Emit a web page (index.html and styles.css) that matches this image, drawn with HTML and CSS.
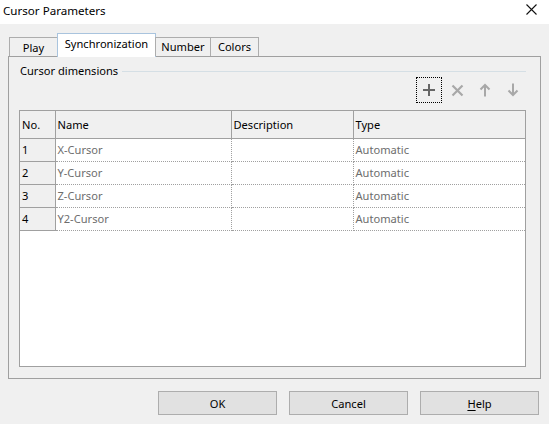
FILE: index.html
```html
<!DOCTYPE html>
<html>
<head>
<meta charset="utf-8">
<link rel="stylesheet" href="styles.css">
</head>
<body>
<div class="dialog">
  <div class="titlebar">
    <span class="title">Cursor Parameters</span>
    <svg class="close" width="11" height="11" viewBox="0 0 11 11"><path d="M0.5 0.5 L10.5 10.5 M10.5 0.5 L0.5 10.5" stroke="#111" stroke-width="1.1" fill="none"/></svg>
  </div>
  <div class="body">
    <div class="tabs">
      <div class="tab tab-play">Play</div>
      <div class="tab tab-active">Synchronization</div>
      <div class="tab tab-number">Number</div>
      <div class="tab tab-colors">Colors</div>
    </div>
    <div class="panel">
      <div class="group-head">
        <span class="group-label">Cursor dimensions</span>
        <span class="group-line"></span>
      </div>
      <div class="toolbar">
        <div class="tbtn focus">
          <svg width="14" height="14" viewBox="0 0 14 14"><path d="M7 1 V13 M1 7 H13" stroke="#666" stroke-width="2" fill="none"/></svg>
        </div>
        <div class="tbtn">
          <svg width="13" height="13" viewBox="0 0 13 13"><path d="M1.5 1.5 L11.5 11.5 M11.5 1.5 L1.5 11.5" stroke="#a8a8a8" stroke-width="2.2" fill="none"/></svg>
        </div>
        <div class="tbtn">
          <svg width="12" height="14" viewBox="0 0 12 14"><path d="M6 2 V13.5 M1.5 6.5 L6 2 L10.5 6.5" stroke="#a8a8a8" stroke-width="2" fill="none"/></svg>
        </div>
        <div class="tbtn">
          <svg width="12" height="14" viewBox="0 0 12 14"><path d="M6 0.5 V12 M1.5 7.5 L6 12 L10.5 7.5" stroke="#a8a8a8" stroke-width="2" fill="none"/></svg>
        </div>
      </div>
      <div class="grid">
        <table>
          <colgroup>
            <col class="c-no"><col class="c-name"><col class="c-desc"><col class="c-type">
          </colgroup>
          <thead>
            <tr><th>No.</th><th>Name</th><th>Description</th><th class="last">Type</th></tr>
          </thead>
          <tbody>
            <tr><td class="no">1</td><td>X-Cursor</td><td></td><td class="last">Automatic</td></tr>
            <tr><td class="no">2</td><td>Y-Cursor</td><td></td><td class="last">Automatic</td></tr>
            <tr><td class="no">3</td><td>Z-Cursor</td><td></td><td class="last">Automatic</td></tr>
            <tr><td class="no">4</td><td>Y2-Cursor</td><td></td><td class="last">Automatic</td></tr>
          </tbody>
        </table>
      </div>
    </div>
    <div class="buttons">
      <div class="btn">OK</div>
      <div class="btn">Cancel</div>
      <div class="btn"><u>H</u>elp</div>
    </div>
  </div>
</div>
</body>
</html>
```
FILE: styles.css
```css
html, body {
  margin: 0;
  padding: 0;
}
body {
  width: 549px;
  height: 424px;
  background: #f0f0f0;
  font-family: "Noto Sans", "Open Sans", sans-serif;
  font-size: 11.1px;
  color: #000;
  overflow: hidden;
}
.dialog {
  width: 549px;
  height: 424px;
  display: flex;
  flex-direction: column;
}
.titlebar {
  height: 24px;
  background: #fff;
  display: flex;
  align-items: center;
  justify-content: space-between;
  padding: 0 12px 0 3px;
  box-sizing: border-box;
}
.title {
  font-size: 11.6px;
  margin-top: -4px;
}
.close {
  margin-top: -5px;
}
.body {
  padding: 9px 8px 0 8px;
}
.tabs {
  display: flex;
  align-items: flex-end;
  height: 23px;
  padding-left: 1px;
  position: relative;
  z-index: 1;
}
.tab {
  height: 19px;
  box-sizing: border-box;
  border: 1px solid #adadad;
  border-bottom: none;
  background: #f0f0f0;
  text-align: center;
  line-height: 17px;
  margin-left: -1px;
}
.tab-play {
  margin-left: 0;
  width: 49px;
  padding-top: 1px;
}
.tab-active {
  width: 99px;
  height: 24px;
  background: #fff;
  border-color: #a9c4de;
  line-height: 20px;
  margin-bottom: -1px;
}
.tab-number { width: 56px; }
.tab-colors { width: 49px; }
.panel {
  height: 323px;
  box-sizing: border-box;
  border: 1px solid #a0a0a0;
  padding: 7px 14px 11px 10px;
  display: flex;
  flex-direction: column;
}
.group-head {
  display: flex;
  align-items: center;
  height: 14px;
  padding-left: 1px;
}
.group-label {
  line-height: 14px;
  margin-top: -1px;
}
.group-line {
  flex: 1;
  height: 1px;
  background: #d5dfe5;
  margin-left: 4px;
}
.toolbar {
  display: flex;
  justify-content: flex-end;
  margin-top: -2px;
  margin-right: -1px;
  height: 28px;
}
.tbtn {
  width: 28px;
  height: 28px;
  display: flex;
  align-items: center;
  justify-content: center;
  box-sizing: border-box;
}
.tbtn.focus {
  outline: 1px dotted #000;
  outline-offset: -2px;
}
.grid {
  margin-top: 6px;
  flex: 1;
  background: #fff;
  border: 1px solid #a0a0a0;
}
table {
  border-collapse: collapse;
  table-layout: fixed;
  width: 505px;
}
.c-no { width: 35px; }
.c-name { width: 176px; }
.c-desc { width: 122px; }
.c-type { width: 172px; }
th {
  height: 27px;
  background: #f0f0f0;
  font-weight: normal;
  text-align: left;
  padding: 0 0 0 2px;
  border-right: 1px solid #a0a0a0;
  border-bottom: 1px solid #a0a0a0;
  box-sizing: border-box;
}
th.last { border-right: none; }
td {
  height: 23px;
  padding: 0 0 0 2px;
  color: #6d6d6d;
  border-right: 1px dotted #a0a0a0;
  border-bottom: 1px dotted #a0a0a0;
  box-sizing: border-box;
  white-space: nowrap;
}
td.no {
  background: #f0f0f0;
  color: #000;
  border-right: 1px solid #a0a0a0;
  border-bottom: 1px solid #a0a0a0;
}
td.last { border-right: none; }
.buttons {
  display: flex;
  justify-content: flex-end;
  gap: 12px;
  margin-top: 12px;
  padding-right: 2px;
}
.btn {
  width: 119px;
  height: 24px;
  box-sizing: border-box;
  background: #e1e1e1;
  border: 1px solid #adadad;
  display: flex;
  align-items: center;
  justify-content: center;
}
.btn u {
  text-underline-offset: 2px;
}
```
